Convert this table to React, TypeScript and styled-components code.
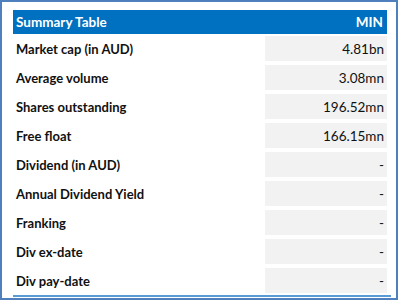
import styled, { createGlobalStyle } from "styled-components";

type RowType = {
  label: string;
  value: string;
};

const rows: RowType[] = [
  { label: "Market cap (in AUD)", value: "4.81bn" },
  { label: "Average volume", value: "3.08mn" },
  { label: "Shares outstanding", value: "196.52mn" },
  { label: "Free float", value: "166.15mn" },
  { label: "Dividend (in AUD)", value: "-" },
  { label: "Annual Dividend Yield", value: "-" },
  { label: "Franking", value: "-" },
  { label: "Div ex-date", value: "-" },
  { label: "Div pay-date", value: "-" },
];

function App() {
  return (
    <>
      <GlobalStyle />
      <Frame>
        <Header>
          <span>Summary Table</span>
          <span>MIN</span>
        </Header>
        {rows.map((row) => (
          <Row key={row.label}>
            <Label>{row.label}</Label>
            <Value>{row.value}</Value>
          </Row>
        ))}
        <BottomLine />
      </Frame>
    </>
  );
}

export default App;

const GlobalStyle = createGlobalStyle`
  body {
    margin: 0;
    background: #fff;
    font-family: Lato, "Liberation Sans", sans-serif;
  }
`;

const Frame = styled.div`
  width: 398px;
  height: 300px;
  box-sizing: border-box;
  border: 2px solid #4f7fbd;
  padding: 8px 9px 0 11px;
  background: #fff;
`;

const Header = styled.div`
  height: 24px;
  background: #0070c0;
  color: #fff;
  font-size: 13.5px;
  font-weight: 700;
  display: flex;
  align-items: center;
  justify-content: space-between;
  padding: 0 4px 0 3px;
`;

const Row = styled.div`
  display: grid;
  grid-template-columns: 1fr 122px;
  height: 29px;
  color: #111;
  font-size: 13.5px;
`;

const Label = styled.div`
  display: flex;
  align-items: center;
  padding-left: 3px;
  font-size: 13px;
  font-weight: 700;
`;

const Value = styled.div`
  margin: 2px 0;
  background: #f2f2f2;
  display: flex;
  align-items: center;
  justify-content: flex-end;
  padding-right: 3px;
`;

const BottomLine = styled.div`
  height: 2px;
  margin-right: -4px;
  background: #5b9bd5;
`;
